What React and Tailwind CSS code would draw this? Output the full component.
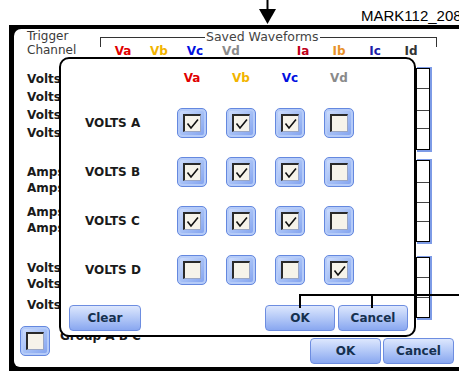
import React from 'react';

const font = "font-['DejaVu_Sans',sans-serif]";

const Check = () => (
    <svg width="13" height="12" viewBox="0 0 13 12">
        <path d="M1.5 5.5 L5 10 L12 1.5" fill="none" stroke="#111" strokeWidth="1.6" />
    </svg>
);

const Box = ({ on }) => (
    <div className="w-[30px] h-[30px] rounded-[5px] border border-[#6488df] bg-gradient-to-br from-[#d3e0fc] via-[#a6c0f6] to-[#7f9fee] shadow-[inset_0_0_0_2px_#b5cbf8] flex items-center justify-center">
        <div className="w-[18px] h-[18px] bg-[#f6f3ea] border-t-2 border-l-2 border-t-[#2a2a2a] border-l-[#2a2a2a] border-r border-b border-r-[#9aa6c4] border-b-[#9aa6c4] flex items-center justify-center">
            {on && <Check />}
        </div>
    </div>
);

const Btn = ({ label, w }) => (
    <div className={`${w} h-[26px] rounded-[4px] border border-[#6d8de0] bg-gradient-to-b from-[#dde7fd] via-[#b3c8f7] to-[#89a7f0] flex items-center justify-center text-[12px] font-bold text-[#15304f]`}>
        {label}
    </div>
);

const CellColumn = ({ cells, mt }) => (
    <div className={`${mt} flex flex-col w-[15px] border-l-2 border-r border-y border-black bg-white shadow-[2px_-1px_0_#7d9be6,2px_2px_0_#7d9be6]`}>
        {cells.map((h, i) => (
            <div key={i} className={`${h} ${i < cells.length - 1 ? 'border-b border-[#444]' : ''}`} />
        ))}
    </div>
);

export default function App() {
    const headers = [
        { t: 'Va', c: 'text-[#e00000]' },
        { t: 'Vb', c: 'text-[#f2b400]' },
        { t: 'Vc', c: 'text-[#0010e0]' },
        { t: 'Vd', c: 'text-[#8a8a8a]' },
        { t: '', c: '' },
        { t: 'Ia', c: 'text-[#c0001a]' },
        { t: 'Ib', c: 'text-[#e8922a]' },
        { t: 'Ic', c: 'text-[#1c1ca8]' },
        { t: 'Id', c: 'text-[#333]' },
    ];

    const rows = [
        { name: 'VOLTS A', v: [true, true, true, false] },
        { name: 'VOLTS B', v: [true, true, true, false] },
        { name: 'VOLTS C', v: [true, true, true, false] },
        { name: 'VOLTS D', v: [false, false, false, true] },
    ];

    return (
        <div className={`relative w-[459px] h-[371px] overflow-hidden bg-white flex flex-col ${font}`}>
            {/* arrow + file name */}
            <div className="h-[25px] w-[540px] flex items-start shrink-0">
                <svg className="ml-[258px] shrink-0" width="19" height="25" viewBox="0 0 19 25">
                    <line x1="9.5" y1="0" x2="9.5" y2="10" stroke="#000" strokeWidth="2" />
                    <polygon points="1,9 18,9 9.5,24" fill="#000" />
                </svg>
                <span className="ml-[84px] mt-[7px] shrink-0 whitespace-nowrap text-[15px] leading-[17px] font-['Liberation_Sans',Arial,sans-serif] text-black">
                    MARK112_2084
                </span>
            </div>

            {/* screen frame */}
            <div className="ml-[9px] w-[460px] h-[346px] shrink-0 bg-black pl-[5px] pt-[4px] pb-[4px]">
                <div className="h-full bg-white rounded-tl-[7px] rounded-bl-[6px] flex flex-col">
                    {/* header */}
                    <div className="h-[29px] flex shrink-0">
                        <div className="ml-[13px] w-[73px] text-[12px] leading-[14px] text-[#3a3a3a]">
                            <div>Trigger</div>
                            <div>Channel</div>
                        </div>
                        <div className="flex flex-col">
                            <div className="relative mt-[8px] w-[337px] h-[11px] border-t-[1.5px] border-x-[1.5px] border-[#333]">
                                <span className="absolute -top-[9px] left-[104px] bg-white px-[1px] text-[12.5px] leading-[15px] text-[#444]">
                                    Saved Waveforms
                                </span>
                            </div>
                            <div className="-mt-[3px] pl-[5px] grid grid-cols-[repeat(9,36px)] text-[12px] leading-[14px] font-bold">
                                {headers.map((h, i) => (
                                    <div key={i} className={`text-center ${h.c}`}>{h.t}</div>
                                ))}
                            </div>
                        </div>
                    </div>

                    {/* main */}
                    <div className="h-[262px] flex shrink-0">
                        <div className="ml-[13px] w-[90px] flex flex-col text-[12px] leading-[16px] font-bold text-[#1a1a1a] whitespace-nowrap">
                            <div className="mt-[13px]">Volts A</div>
                            <div className="mt-[2px]">Volts B</div>
                            <div className="mt-[2px]">Volts C</div>
                            <div className="mt-[2px]">Volts D</div>
                            <div className="mt-[23px]">Amps A</div>
                            <div>Amps B</div>
                            <div className="mt-[8px]">Amps C</div>
                            <div>Amps D</div>
                            <div className="mt-[24px]">Volts A</div>
                            <div>Volts B</div>
                            <div className="mt-[5px]">Volts C</div>
                        </div>
                        <div className="ml-[298px] flex flex-col">
                            <CellColumn mt="mt-[10px]" cells={['h-[20px]', 'h-[22px]', 'h-[18px]', 'h-[20px]']} />
                            <CellColumn mt="mt-[10px]" cells={['h-[22px]', 'h-[20px]', 'h-[19px]', 'h-[19px]']} />
                            <CellColumn mt="mt-[15px]" cells={['h-[20px]', 'h-[20px]', 'h-[19px]']} />
                        </div>
                    </div>

                    {/* bottom */}
                    <div className="flex flex-1">
                        <div className="ml-[6px] mt-[6px]">
                            <Box on={false} />
                        </div>
                        <div className="ml-[10px] mt-[8px] text-[12px] leading-[16px] font-bold text-[#1a1a1a] whitespace-nowrap">
                            Group A B C
                        </div>
                        <div className="ml-auto mr-[15px] mt-[18px] flex gap-[2px]">
                            <Btn label="OK" w="w-[71px]" />
                            <Btn label="Cancel" w="w-[71px]" />
                        </div>
                    </div>
                </div>
            </div>

            {/* dialog */}
            <div className="absolute left-[59px] top-[57px] w-[357px] h-[280px] border-2 border-black rounded-[10px] bg-white flex flex-col">
                <div className="mt-[11px] pl-[24px] grid grid-cols-[73px_30px_30px_30px_30px] gap-x-[19px] text-[12px] leading-[16px] font-bold">
                    <div />
                    <div className="text-center text-[#e00000]">Va</div>
                    <div className="text-center text-[#f2b400]">Vb</div>
                    <div className="text-center text-[#0010e0]">Vc</div>
                    <div className="text-center text-[#8a8a8a]">Vd</div>
                </div>
                <div className="mt-[22px] pl-[24px] grid grid-cols-[73px_30px_30px_30px_30px] gap-x-[19px] gap-y-[19px] items-center">
                    {rows.map((r) => (
                        <React.Fragment key={r.name}>
                            <div className="text-[12px] leading-[16px] font-bold text-[#1a1a1a] whitespace-nowrap">{r.name}</div>
                            {r.v.map((on, i) => (
                                <Box key={i} on={on} />
                            ))}
                        </React.Fragment>
                    ))}
                </div>
                <div className="mt-[20px] flex pl-[8px] pr-[6px]">
                    <Btn label="Clear" w="w-[72px]" />
                    <div className="ml-auto flex gap-[3px]">
                        <Btn label="OK" w="w-[70px]" />
                        <Btn label="Cancel" w="w-[70px]" />
                    </div>
                </div>
            </div>

            {/* callout lines */}
            <div className="absolute left-[299px] top-[294px] w-[160px] h-[2px] bg-black" />
            <div className="absolute left-[299px] top-[294px] w-[2px] h-[14px] bg-black" />
            <div className="absolute left-[371px] top-[294px] w-[2px] h-[14px] bg-black" />
        </div>
    );
}
